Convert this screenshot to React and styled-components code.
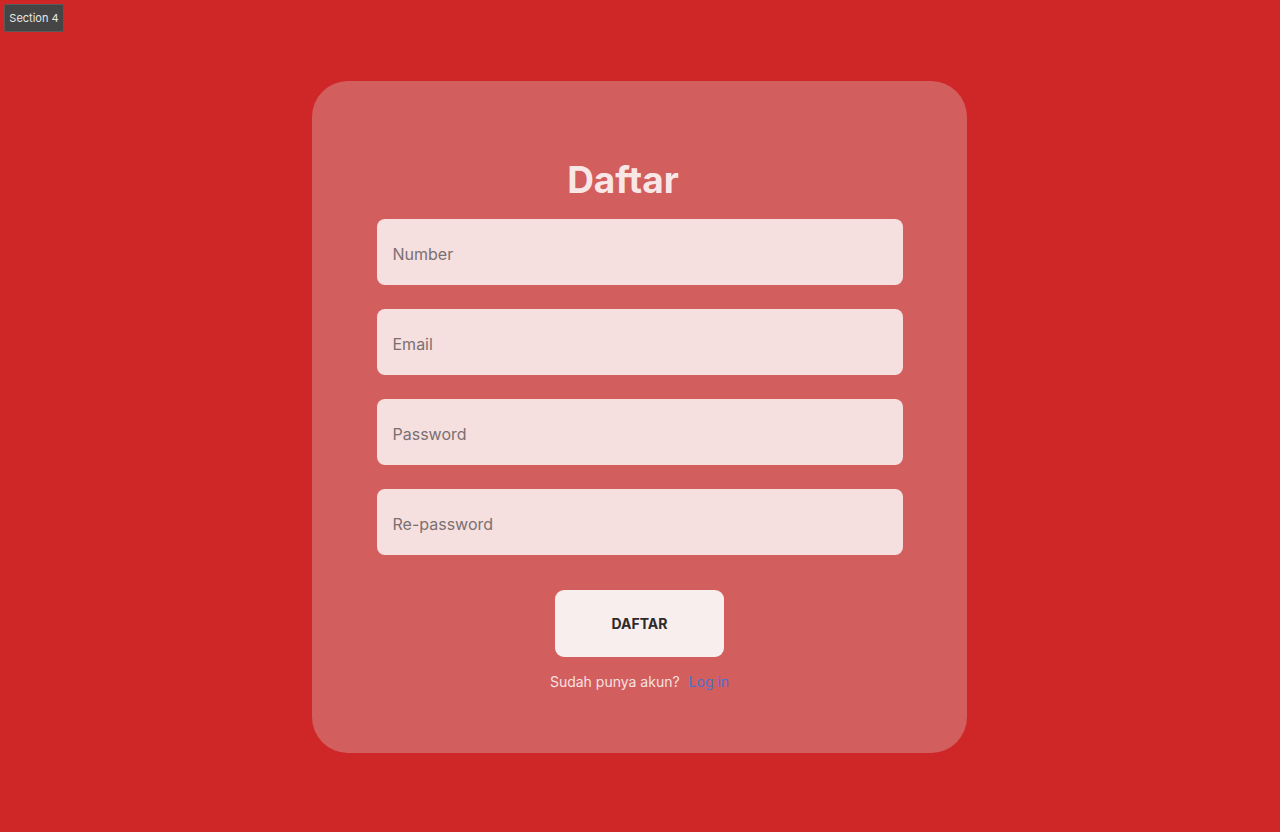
import React from "react";
import styled, { createGlobalStyle } from "styled-components";

const GlobalStyle = createGlobalStyle`
  body {
    margin: 0;
    font-family: Inter, "Noto Sans", sans-serif;
    background-color: #cf2727;
  }
`;

const Page = styled.div`
  min-height: 100vh;
  padding: 81px 1px 0 0;
  box-sizing: border-box;
  display: flex;
  justify-content: center;
  align-items: flex-start;
  background-color: #cf2727;
`;

const Badge = styled.div`
  position: absolute;
  top: 4px;
  left: 4px;
  width: 60px;
  height: 28px;
  box-sizing: border-box;
  display: flex;
  align-items: center;
  justify-content: center;
  background-color: #454545;
  border: 1px solid #5a5a5a;
  border-radius: 2px;
  color: #e8e8e8;
  font-size: 11px;
`;

const Card = styled.div`
  width: 655px;
  box-sizing: border-box;
  padding: 77px 0 63px;
  background-color: #d35e5e;
  border-radius: 36px;
  display: flex;
  flex-direction: column;
  align-items: center;
`;

const Title = styled.h1`
  margin: 0 33px 17px 0;
  font-size: 37px;
  line-height: 1.2;
  font-weight: 700;
  color: #f9e7e7;
`;

const Fields = styled.div`
  display: flex;
  flex-direction: column;
  gap: 24px;
`;

const Input = styled.input`
  width: 526px;
  height: 66px;
  box-sizing: border-box;
  padding: 4px 16px 0;
  border: none;
  outline: none;
  border-radius: 8px;
  background-color: #f5dfdf;
  font-family: Inter, "Noto Sans", sans-serif;
  font-size: 16px;
  color: #333;

  &::placeholder {
    color: #7b7070;
  }
`;

const Button = styled.button`
  margin-top: 35px;
  width: 169px;
  height: 67px;
  border: none;
  border-radius: 9px;
  background-color: #f8eeee;
  color: #2f2a2a;
  font-family: Inter, "Noto Sans", sans-serif;
  font-size: 14px;
  font-weight: 700;
  cursor: pointer;
`;

const Footer = styled.p`
  margin: 16px 0 0;
  font-size: 14px;
  line-height: 17px;
  color: #f6e1e1;
`;

const Link = styled.a`
  margin-left: 9px;
  color: #4a72d0;
  text-decoration: none;
`;

function App() {
  return (
    <>
      <GlobalStyle />
      <Badge>Section 4</Badge>
      <Page>
        <Card>
          <Title>Daftar</Title>
          <Fields>
            <Input type="text" placeholder="Number" />
            <Input type="email" placeholder="Email" />
            <Input type="password" placeholder="Password" />
            <Input type="password" placeholder="Re-password" />
          </Fields>
          <Button>DAFTAR</Button>
          <Footer>
            Sudah punya akun?
            <Link href="#">Log in</Link>
          </Footer>
        </Card>
      </Page>
    </>
  );
}

export default App;
